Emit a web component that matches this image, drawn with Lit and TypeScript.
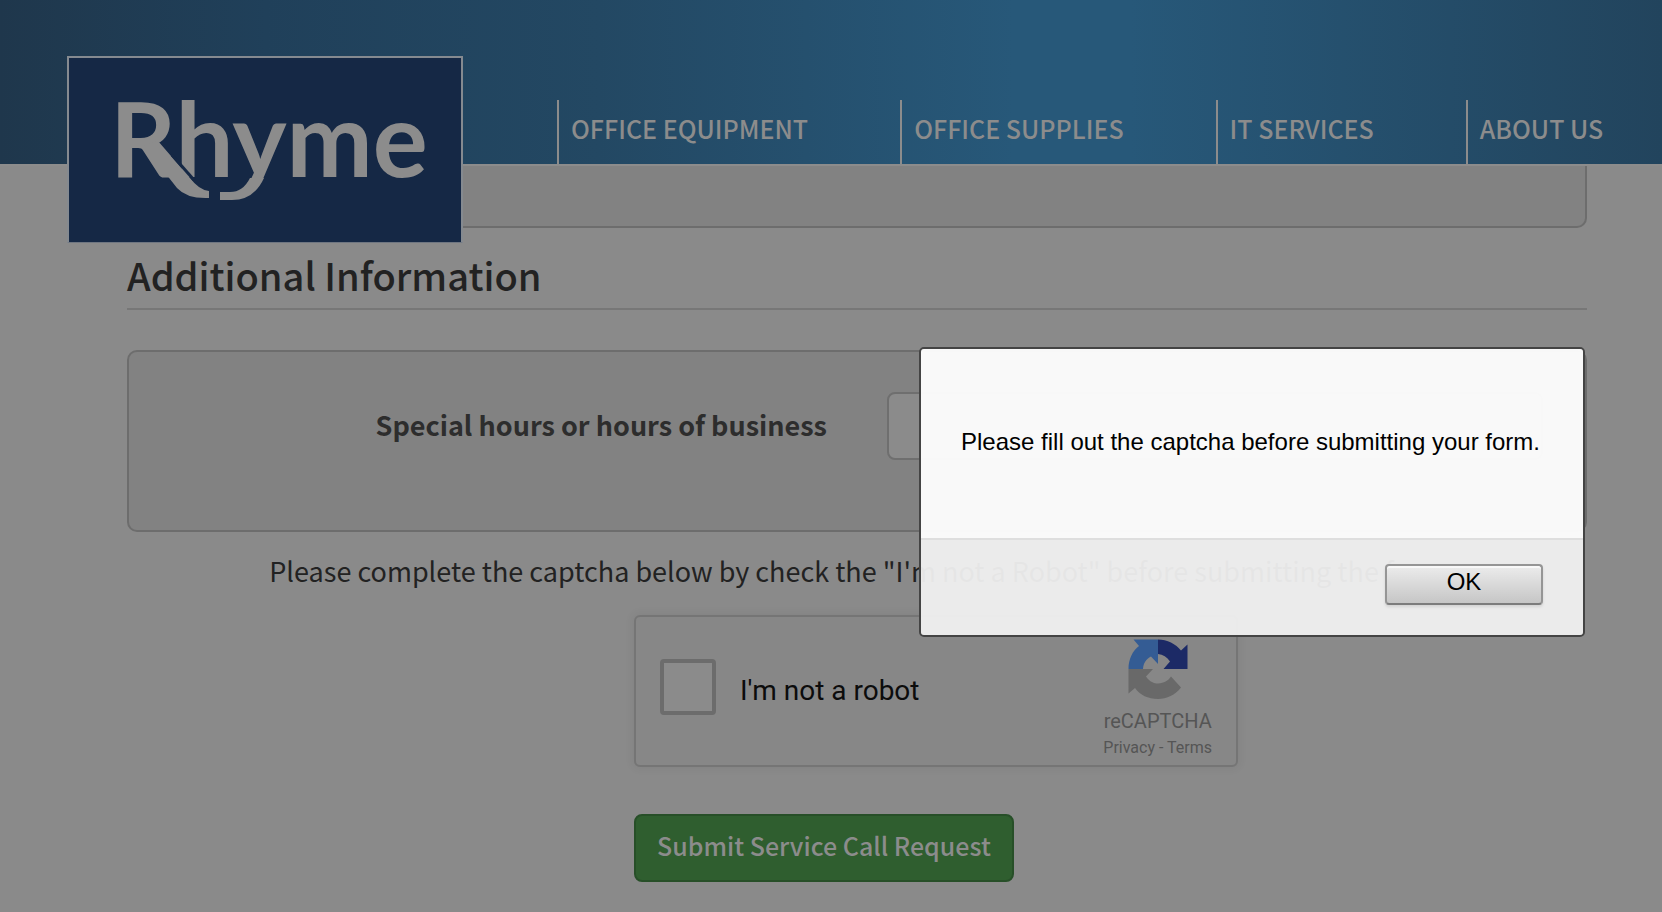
import { LitElement, html, css, svg } from "lit";
import { customElement, property } from "lit/decorators.js";

const NAV = ["Office Equipment", "Office Supplies", "IT Services", "About Us"];

@customElement("rhyme-logo")
export class RhymeLogo extends LitElement {
  static styles = css`
    :host { display: block; }
    a {
      display: block;
      box-sizing: border-box;
      width: 396px;
      height: 187px;
      border: 2px solid #858a90;
      border-bottom: 1px solid #6f7681;
      background: #152845;
    }
    svg { display: block; width: 100%; height: 100%; }
    .word { fill: #8c8c8c; font: 700 103px Lato, sans-serif; }
    .swash { fill: #8c8c8c; }
    .gap { fill: none; stroke: #152845; stroke-width: 3; }
    .cover { fill: #152845; }
  `;
  render() {
    return html`<a href="#home" aria-label="Rhyme home">${svg`
      <svg viewBox="69 58 392 184" aria-hidden="true">
        <text class="word" x="110" y="177">Rhyme</text>
        <path class="cover" d="M236 179H270V206H236Z" />
        <path class="swash" d="M144 146L158 141L190 178Q199 190 209 191V198Q187 199 177 188Z" />
        <path class="gap" d="M172 155L194 180" />
        <path class="swash" d="M250 178H264Q254 200 232 200H220V192H230Q243 192 250 178Z" />
      </svg>`}</a>`;
  }
}

@customElement("site-header")
export class SiteHeader extends LitElement {
  static styles = css`
    :host { display: block; position: relative; z-index: 1; }
    header {
      display: flex;
      align-items: flex-end;
      height: 164px;
      padding-left: 67px;
      border-bottom: 2px solid #8c8c8c;
      background: linear-gradient(90deg, #1f374c 0%, #20405a 16%, #234863 36%, #275879 61%, #275879 68%, #22445d 100%) padding-box;
    }
    rhyme-logo { margin-bottom: -79px; }
    nav { display: flex; flex: 1; margin-left: 94px; overflow: hidden; }
    .item {
      box-sizing: border-box;
      height: 64px;
      padding: 0 92px 0 12px;
      border-left: 2px solid #8c8c8c;
      color: #8c8c8c;
      font-size: 25px;
      font-weight: 500;
      line-height: 56px;
      text-decoration: none;
      text-transform: uppercase;
      white-space: nowrap;
    }
  `;
  render() {
    return html`<header>
      <rhyme-logo></rhyme-logo>
      <nav aria-label="Main">${NAV.map((n) => html`<a class="item" href="#">${n}</a>`)}</nav>
    </header>`;
  }
}

@customElement("captcha-box")
export class CaptchaBox extends LitElement {
  static styles = css`
    :host {
      display: flex;
      align-items: center;
      justify-content: space-between;
      box-sizing: border-box;
      width: 604px;
      height: 152px;
      padding: 0 24px;
      border: 2px solid #757575;
      border-radius: 6px;
      background: #878787;
      box-shadow: 0 0 8px 2px rgba(0, 0, 0, 0.05);
      font-family: Roboto, sans-serif;
    }
    label { display: flex; align-items: center; gap: 24px; padding-bottom: 8px; color: #0c0c0c; font-size: 28px; line-height: 52px; }
    .text { padding-top: 8px; }
    input {
      appearance: none;
      box-sizing: border-box;
      width: 56px;
      height: 56px;
      margin: 0;
      border: 4px solid #6c6c6c;
      border-radius: 4px;
      background: #8b8b8b;
    }
    .brand { display: flex; flex-direction: column; align-items: center; padding-top: 18px; color: #555; }
    svg { width: 60px; height: 60px; }
    .name { margin-top: 8px; font-size: 20px; line-height: 28px; }
    .links { font-size: 16px; line-height: 26px; }
    a { color: inherit; text-decoration: none; }
  `;
  render() {
    return html`
      <label><input type="checkbox" /><span class="text">I'm not a robot</span></label>
      <div class="brand">
        ${svg`<svg viewBox="0 0 60 60" aria-hidden="true">
          <path fill="#345c94" d="M30 .5V25L23 17.500C18 20 15.500 24 15 30H.500C.500 20 4.500 12 11 7L5.500 .5Z"/>
          <path fill="#1c2a66" d="M30 .5C39 .5 48 5 53 11.500L59.500 5.500V30H35.500L42 22.500C39 18 35 15.500 30 15Z"/>
          <path fill="#696969" d="M.5 30H25L18 37.500C22 43 26 44.500 30 44.500C36 44 40 42 43 37.500L53 48.500C47 56 39 60 30 60C20 60 12 56 7 49L.5 54.500Z"/>
        </svg>`}
        <span class="name">reCAPTCHA</span>
        <span class="links"><a href="#privacy">Privacy</a> - <a href="#terms">Terms</a></span>
      </div>`;
  }
}

@customElement("alert-dialog")
export class AlertDialog extends LitElement {
  @property() message = "";
  static styles = css`
    .dialog {
      box-sizing: border-box;
      width: 666px;
      border: 2px solid #444;
      border-radius: 5px;
      color: #000;
      font-family: "Liberation Sans", Arial, sans-serif;
      font-size: 24px;
      line-height: 28px;
      overflow: hidden;
    }
    p { margin: 0; padding: 79px 0 82px 40px; background: rgba(254, 254, 254, 0.96); white-space: nowrap; }
    footer {
      display: flex;
      justify-content: flex-end;
      padding: 24px 40px 30px;
      border-top: 2px solid #dedede;
      background: rgba(240, 240, 240, 0.95);
    }
    button {
      box-sizing: border-box;
      width: 158px;
      height: 41px;
      padding: 0 0 5px;
      border: 2px solid #959595;
      border-bottom-color: #7c7c7c;
      border-radius: 4px;
      background: linear-gradient(#ececec, #c6c6c6);
      box-shadow: inset 0 2px #f8f8f8, 0 2px 3px rgba(0, 0, 0, 0.1);
      color: #000;
      font: inherit;
    }
  `;
  render() {
    return html`<div class="dialog" role="alertdialog" aria-modal="true" aria-describedby="msg">
      <p id="msg">${this.message}</p>
      <footer><button type="button">OK</button></footer>
    </div>`;
  }
}

@customElement("app-root")
export class AppRoot extends LitElement {
  static styles = css`
    :host {
      display: block;
      position: relative;
      min-height: 100vh;
      background: #8a8a8a;
      color: #222;
      font-family: "Noto Sans CJK SC", sans-serif;
      overflow: hidden;
    }
    main { padding: 0 75px 30px 127px; }
    .well { box-sizing: border-box; border: 2px solid #6d6d6d; border-radius: 10px; background: #828282; }
    .previous { height: 62px; border-top: 0; border-radius: 0 0 10px 10px; }
    h2 {
      margin: 0 0 40px;
      padding: 22px 0 8px;
      border-bottom: 2px solid #777;
      font-size: 38px;
      font-weight: 500;
      line-height: 50px;
    }
    .hours { display: grid; grid-template-columns: 698px 1fr; column-gap: 60px; height: 182px; padding: 40px 42px 0 0; }
    .hours label { color: #2d2d2d; font-size: 27px; font-weight: 700; line-height: 66px; text-align: right; white-space: nowrap; }
    .hours input {
      box-sizing: border-box;
      width: 100%;
      height: 68px;
      border: 2px solid #6f6f6f;
      border-radius: 8px;
      background: #8b8b8b;
    }
    .note { margin: 19px 0 24px; padding-left: 8px; font-size: 27px; line-height: 40px; text-align: center; }
    .actions { display: flex; flex-direction: column; align-items: flex-start; gap: 47px; padding-left: 507px; }
    .submit {
      height: 68px;
      padding: 0 21px 6px;
      border: 2px solid #274f28;
      border-radius: 8px;
      background: #2f5e2f;
      color: #8c8c8c;
      font: 500 25px/58px "Noto Sans CJK SC", sans-serif;
    }
    alert-dialog { position: absolute; top: 347px; right: 77px; z-index: 2; }
  `;
  render() {
    return html`
      <site-header></site-header>
      <main>
        <div class="well previous"></div>
        <h2>Additional Information</h2>
        <div class="well hours">
          <label for="hours">Special hours or hours of business</label>
          <input id="hours" type="text" />
        </div>
        <p class="note">Please complete the captcha below by check the "I'm not a Robot" before submitting the form.</p>
        <div class="actions">
          <captcha-box></captcha-box>
          <button class="submit" type="button">Submit Service Call Request</button>
        </div>
      </main>
      <alert-dialog message="Please fill out the captcha before submitting your form."></alert-dialog>`;
  }
}
